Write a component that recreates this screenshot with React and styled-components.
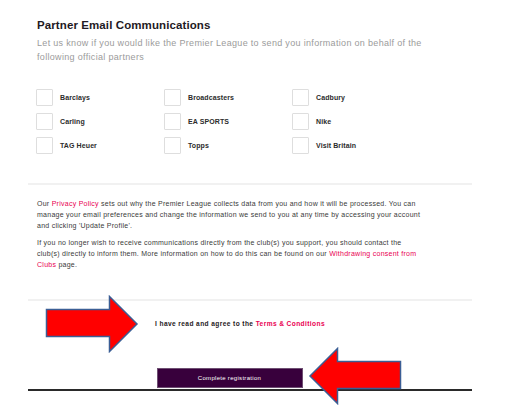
import React from "react";
import styled, { createGlobalStyle } from "styled-components";

const Global = createGlobalStyle`
  html, body { margin: 0; padding: 0; background: #fff; }
  body { font-family: "Liberation Sans", Arial, sans-serif; }
`;

const Page = styled.div`
  position: relative;
  width: 509px;
  height: 405px;
  overflow: hidden;
  background: #fff;
`;

const Container = styled.div`
  margin-left: 28px;
  width: 444px;
  padding-top: 17px;
`;

const Section = styled.section`
  padding: 0 9px;
`;

const Title = styled.h2`
  margin: 0;
  font-size: 11.5px;
  line-height: 17px;
  font-weight: 700;
  color: #1f1a24;
  letter-spacing: 0.1px;
`;

const Subtitle = styled.p`
  margin: 2px 0 0;
  font-size: 9px;
  line-height: 14px;
  color: #9b9b9b;
  white-space: nowrap;
  letter-spacing: 0.32px;
`;

const Grid = styled.div`
  margin-top: 25px;
  display: grid;
  grid-template-columns: repeat(3, 128px);
  grid-auto-rows: 16px;
  row-gap: 8px;
`;

const Option = styled.label`
  display: flex;
  align-items: center;
  gap: 7px;
  font-size: 7px;
  font-weight: 700;
  color: #2c2c2c;
  margin-left: -1px;
  letter-spacing: 0.1px;
`;

const Box = styled.span`
  width: 15px;
  height: 15px;
  border: 1px solid #dedede;
  border-radius: 1px;
  background: #fff;
  flex: none;
`;

const Divider = styled.hr`
  margin: ${(p) => p.$top}px 0 0;
  border: none;
  height: ${(p) => p.$h || 2}px;
  background: ${(p) => p.$color || "#f1f1f1"};
`;

const Body = styled.p`
  margin: ${(p) => p.$top}px 0 0;
  font-size: 7px;
  line-height: 11px;
  color: #3a3a3a;
  white-space: nowrap;
  letter-spacing: 0.26px;
`;

const Link = styled.a`
  color: #e90052;
  text-decoration: none;
`;

const Terms = styled.p`
  margin: 17px 0 0;
  padding-left: 127px;
  font-size: 6.6px;
  line-height: 11px;
  font-weight: 700;
  color: #1f1a24;
  letter-spacing: 0.4px;
  white-space: nowrap;
`;

const Actions = styled.div`
  display: flex;
  justify-content: center;
  margin-top: 39px;
  padding-right: 41px;
`;

const Button = styled.button`
  width: 146px;
  height: 20px;
  background: #38003c;
  border: 1px solid #6e4f72;
  color: #fff;
  font-family: inherit;
  font-size: 6px;
  letter-spacing: 0.3px;
  padding: 0;
`;

const ArrowWrap = styled.svg`
  position: absolute;
  left: ${(p) => p.$x}px;
  top: ${(p) => p.$y}px;
  transform: ${(p) => (p.$flip ? "scaleX(-1)" : "none")};
  pointer-events: none;
`;

const Arrow = ({ x, y, flip }) => (
  <ArrowWrap $x={x} $y={y} $flip={flip} width="94" height="58" viewBox="0 0 94 58">
    <polygon
      points="1.5,14.5 64.5,14.5 64.5,1.5 92,29 64.5,56.5 64.5,41.5 1.5,41.5"
      fill="#ff0000"
      stroke="#3b5e95"
      strokeWidth="1.5"
      strokeLinejoin="miter"
    />
  </ArrowWrap>
);

const partners = [
  "Barclays",
  "Broadcasters",
  "Cadbury",
  "Carling",
  "EA SPORTS",
  "Nike",
  "TAG Heuer",
  "Topps",
  "Visit Britain",
];

export default function App() {
  return (
    <Page>
      <Global />
      <Container>
        <Section>
          <Title>Partner Email Communications</Title>
          <Subtitle>
            Let us know if you would like the Premier League to send you information on behalf of the
            <br />
            following official partners
          </Subtitle>
          <Grid>
            {partners.map((p) => (
              <Option key={p}>
                <Box />
                {p}
              </Option>
            ))}
          </Grid>
        </Section>
        <Divider $top={30} />
        <Section>
          <Body $top={13}>
            Our <Link>Privacy Policy</Link> sets out why the Premier League collects data from you and how it
            will be processed. You can
            <br />
            manage your email preferences and change the information we send to you at any time by accessing
            your account
            <br />
            and clicking 'Update Profile'.
          </Body>
          <Body $top={6}>
            If you no longer wish to receive communications directly from the club(s) you support, you should
            contact the
            <br />
            club(s) directly to inform them. More information on how to do this can be found on our{" "}
            <Link>Withdrawing consent from</Link>
            <br />
            <Link>Clubs</Link> page.
          </Body>
        </Section>
        <Divider $top={29} />
        <Terms>
          I have read and agree to the <Link>Terms &amp; Conditions</Link>
        </Terms>
        <Actions>
          <Button>Complete registration</Button>
        </Actions>
        <Divider $top={1} $h={2} $color="#2a2a2a" />
      </Container>
      <Arrow x={45} y={295} />
      <Arrow x={308} y={347} flip />
    </Page>
  );
}
